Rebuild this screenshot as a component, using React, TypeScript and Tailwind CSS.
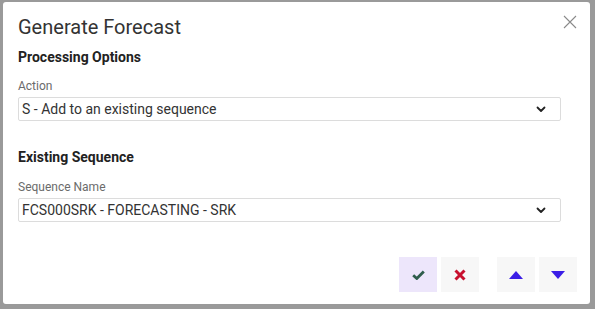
import React from "react";

function Chevron() {
  return (
    <svg width="10" height="7" viewBox="0 0 10 7" className="shrink-0">
      <path d="M1.5 1.5 L5 5 L8.5 1.5" fill="none" stroke="#222" strokeWidth="1.8" strokeLinecap="round" strokeLinejoin="round" />
    </svg>
  );
}

function Select({ value }: { value: string }) {
  return (
    <div className="ml-[15px] flex h-[24px] w-[543px] items-center justify-between rounded-[2px] border border-[#dcdcdc] bg-white pl-[3px] pr-[14px]">
      <span className="text-[14px] leading-[20px] text-[#333]">{value}</span>
      <Chevron />
    </div>
  );
}

export default function App() {
  return (
    <div
      className="h-[309px] w-[595px] overflow-hidden bg-[#9a9a9a] pl-[3px] pt-[2px]"
      style={{ fontFamily: "Roboto, 'Liberation Sans', sans-serif" }}
    >
      <div className="relative h-[302px] w-[587px] rounded-[3px] bg-white">
        <div className="flex items-start justify-between pl-[15px] pr-[12px] pt-[13px]">
          <h1 className="text-[20px] leading-[24px] text-[#333]">Generate Forecast</h1>
          <button className="mt-[-1px] flex h-[16px] w-[16px] items-center justify-center">
            <svg width="14" height="14" viewBox="0 0 14 14">
              <path d="M1 1 L13 13 M13 1 L1 13" stroke="#8a8a8a" strokeWidth="1.1" />
            </svg>
          </button>
        </div>

        <h2 className="ml-[15px] mt-[8px] text-[14px] font-bold leading-[20px] text-[#222]">Processing Options</h2>
        <div className="ml-[15px] mt-[11px] text-[12px] leading-[16px] text-[#6b6b6b]">Action</div>
        <div className="mt-[3px]">
          <Select value="S - Add to an existing sequence" />
        </div>

        <h2 className="ml-[15px] mt-[26px] text-[14px] font-bold leading-[20px] text-[#222]">Existing Sequence</h2>
        <div className="ml-[15px] mt-[12px] text-[12px] leading-[16px] text-[#6b6b6b]">Sequence Name</div>
        <div className="mt-[3px]">
          <Select value="FCS000SRK - FORECASTING - SRK" />
        </div>

        <div className="mr-[13px] mt-[35px] flex justify-end">
          <div className="flex gap-[4px]">
            <button className="flex h-[35px] w-[38px] items-center justify-center bg-[#ede6fb]">
              <svg width="13" height="10" viewBox="0 0 13 10">
                <path d="M1.2 5.2 L4.8 8.5 L11.8 1.5" fill="none" stroke="#2f5d4c" strokeWidth="2.8" />
              </svg>
            </button>
            <button className="flex h-[35px] w-[38px] items-center justify-center bg-[#f7f7f7]">
              <svg width="12" height="12" viewBox="0 0 12 12">
                <path d="M1.5 1.5 L10.5 10.5 M10.5 1.5 L1.5 10.5" stroke="#c8102e" strokeWidth="3" />
              </svg>
            </button>
          </div>
          <div className="ml-[18px] flex gap-[4px]">
            <button className="flex h-[35px] w-[38px] items-center justify-center bg-[#f7f7f7]">
              <svg width="14" height="8" viewBox="0 0 14 8">
                <path d="M7 0 L14 8 L0 8 Z" fill="#3b1ee6" />
              </svg>
            </button>
            <button className="flex h-[35px] w-[38px] items-center justify-center bg-[#f7f7f7]">
              <svg width="14" height="8" viewBox="0 0 14 8">
                <path d="M0 0 L14 0 L7 8 Z" fill="#3b1ee6" />
              </svg>
            </button>
          </div>
        </div>
      </div>
    </div>
  );
}
